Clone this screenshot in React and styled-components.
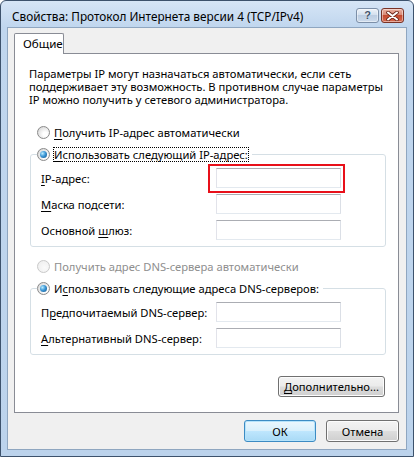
import React from 'react';
import styled, { createGlobalStyle } from 'styled-components';

const GlobalStyle = createGlobalStyle`
  html, body {
    margin: 0;
    padding: 0;
    background: #ffffff;
  }
  body {
    font-family: "Noto Sans", "Open Sans", "Liberation Sans", sans-serif;
    font-size: 11.2px;
    color: #000;
  }
`;

const Window = styled.div`
  width: 414px;
  height: 457px;
  box-sizing: border-box;
  border: 1px solid #3d526c;
  border-radius: 6px 6px 0 0;
  background: linear-gradient(#d6e5f6, #c0d6ee 26px, #bcd3ec);
  display: flex;
  flex-direction: column;
  padding: 0 6px 6px;
  overflow: hidden;
`;

const TitleBar = styled.div`
  height: 26px;
  display: flex;
  align-items: flex-start;
  padding-left: 5px;
  padding-right: 3px;
  flex-shrink: 0;
`;

const TitleText = styled.div`
  flex: 1;
  font-size: 11.8px;
  line-height: 16px;
  margin-top: 7px;
  color: #000;
  white-space: nowrap;
`;

const CaptionButtons = styled.div`
  display: flex;
  gap: 2px;
  margin-top: 7px;
`;

const CaptionButton = styled.div`
  width: 23px;
  height: 15px;
  box-sizing: border-box;
  border-radius: 3px;
  display: flex;
  align-items: center;
  justify-content: center;
  border: 1px solid ${p => (p.$close ? '#7a3326' : '#7c8fa8')};
  background: ${p =>
    p.$close
      ? 'linear-gradient(#eab0a1, #d98a76 45%, #c4492f 50%, #d66a4f)'
      : 'linear-gradient(#eef3f9, #d3dfee 45%, #bccde2 50%, #cddbec)'};
  box-shadow: inset 0 0 0 1px rgba(255, 255, 255, 0.45);
`;

const HelpMark = styled.span`
  font-family: "Liberation Sans", sans-serif;
  font-weight: bold;
  font-size: 11px;
  line-height: 1;
  color: #3f536c;
  text-shadow: 0 0 1px #fff;
`;

const Client = styled.div`
  flex: 1;
  display: flex;
  flex-direction: column;
  background: #f0f0f0;
  border: 1px solid #8fa6c0;
  padding: 5px 7px 7px 6px;
`;

const TabStrip = styled.div`
  display: flex;
  position: relative;
  z-index: 1;
  margin-bottom: -1px;
`;

const Tab = styled.div`
  width: 50px;
  height: 21px;
  box-sizing: border-box;
  border: 1px solid #898c95;
  border-bottom: none;
  background: #ffffff;
  border-radius: 2px 2px 0 0;
  padding-left: 8px;
  line-height: 19px;
  font-size: 11.6px;
`;

const Panel = styled.div`
  flex: 1;
  display: flex;
  flex-direction: column;
  border: 1px solid #898c95;
  background: #ffffff;
  padding: 13px 12px 15px 14px;
`;

const Intro = styled.p`
  margin: 0;
  line-height: 13px;
  white-space: pre;
`;

const RadioRow = styled.label`
  display: flex;
  align-items: center;
  height: 15px;
  gap: 4px;
  white-space: nowrap;
  margin-left: ${p => p.$indent ?? 8}px;
  margin-top: ${p => p.$top || 0}px;
  color: ${p => (p.$disabled ? '#8e8e8e' : '#000')};
`;

const RadioCircle = styled.span`
  width: 13px;
  height: 13px;
  box-sizing: border-box;
  border-radius: 50%;
  flex-shrink: 0;
  display: flex;
  align-items: center;
  justify-content: center;
  border: 1px solid ${p => (p.$disabled ? '#c9c9c9' : '#8a8a8a')};
  background: ${p =>
    p.$disabled
      ? 'radial-gradient(circle at 60% 60%, #fafafa, #ececec)'
      : 'radial-gradient(circle at 65% 65%, #ffffff 20%, #d4d4d4 90%)'};

  &::after {
    content: '';
    display: ${p => (p.$checked ? 'block' : 'none')};
    width: 7px;
    height: 7px;
    border-radius: 50%;
    background: radial-gradient(circle at 35% 35%, #b9ecff 0%, #3d97d6 45%, #0d4f86 100%);
  }
`;

const FocusLabel = styled.span`
  outline: 1px dotted #000;
  outline-offset: 0px;
  line-height: 13px;
`;

const GroupBox = styled.fieldset`
  margin: ${p => p.$top || 0}px 0 0 1px;
  padding: 6px 0 6px 0;
  border: 1px solid #d5dfe5;
  border-radius: 3px;
  display: flex;
  flex-direction: column;
  gap: 6px;
  min-width: 0;
`;

const GroupLegend = styled.legend`
  padding: 0 4px 0 0;
  margin-left: 6px;
`;

const FieldRow = styled.div`
  display: flex;
  align-items: center;
  height: 20px;
  padding-left: 10px;
`;

const FieldLabel = styled.span`
  width: 175px;
  flex-shrink: 0;
  white-space: nowrap;
`;

const FieldWrap = styled.div`
  position: relative;
  display: flex;

  &::after {
    content: '';
    display: ${p => (p.$marked ? 'block' : 'none')};
    position: absolute;
    left: -8px;
    right: -4px;
    top: -4px;
    bottom: -5px;
    border: 2px solid #e8101a;
    pointer-events: none;
  }
`;

const TextBox = styled.input`
  width: 125px;
  height: 20px;
  box-sizing: border-box;
  margin: 0;
  border: 1px solid;
  border-color: #abadb3 #dbdfe6 #e3e9ef #e2e3ea;
  background: #ffffff;
  font: inherit;
  padding: 0 3px;
  outline: none;
`;

const AdvancedRow = styled.div`
  margin-top: auto;
  display: flex;
  justify-content: flex-end;
  margin-right: 1px;
`;

const Button = styled.button`
  box-sizing: border-box;
  width: ${p => p.$w}px;
  height: ${p => p.$h || 22}px;
  margin: 0;
  padding: 0;
  font: inherit;
  color: #000;
  border-radius: 3px;
  border: 1px solid ${p => (p.$default ? '#3c8bc3' : '#707070')};
  background: ${p =>
    p.$default
      ? 'linear-gradient(#ecf7fd, #d9f0fc 48%, #bee6fd 52%, #a9daf6)'
      : 'linear-gradient(#f3f3f3, #ebebeb 48%, #dddddd 52%, #cfcfcf)'};
  box-shadow: inset 0 0 0 1px ${p => (p.$default ? '#b5e3fb' : '#fcfcfc')};
`;

const ButtonRow = styled.div`
  display: flex;
  justify-content: flex-end;
  gap: 10px;
  margin-top: 7px;
`;

const Key = styled.u`
  text-decoration: underline;
  text-underline-offset: 2px;
`;

const CloseGlyph = () => (
  <svg width="13" height="10" viewBox="0 0 13 10">
    <path d="M2 1.5 L11 8.5 M11 1.5 L2 8.5" stroke="#6b2418" strokeWidth="3.6" strokeLinecap="round" />
    <path d="M2 1.5 L11 8.5 M11 1.5 L2 8.5" stroke="#ffffff" strokeWidth="2" strokeLinecap="round" />
  </svg>
);

const Radio = ({ checked, disabled }) => (
  <RadioCircle $checked={checked} $disabled={disabled} />
);

const Field = ({ label, marked }) => (
  <FieldRow>
    <FieldLabel>{label}</FieldLabel>
    <FieldWrap $marked={marked}>
      <TextBox type="text" />
    </FieldWrap>
  </FieldRow>
);

export default function App() {
  return (
    <>
      <GlobalStyle />
      <Window>
        <TitleBar>
          <TitleText>Свойства: Протокол Интернета версии 4 (TCP/IPv4)</TitleText>
          <CaptionButtons>
            <CaptionButton>
              <HelpMark>?</HelpMark>
            </CaptionButton>
            <CaptionButton $close>
              <CloseGlyph />
            </CaptionButton>
          </CaptionButtons>
        </TitleBar>
        <Client>
          <TabStrip>
            <Tab>Общие</Tab>
          </TabStrip>
          <Panel>
            <Intro>
              {'Параметры IP могут назначаться автоматически, если сеть\nподдерживает эту возможность. В противном случае параметры\nIP можно получить у сетевого администратора.'}
            </Intro>

            <RadioRow $top={19}>
              <Radio />
              <span><Key>П</Key>олучить IP-адрес автоматически</span>
            </RadioRow>

            <GroupBox $top={7}>
              <GroupLegend>
                <RadioRow $indent={0}>
                  <Radio checked />
                  <FocusLabel><Key>И</Key>спользовать следующий IP-адрес:</FocusLabel>
                </RadioRow>
              </GroupLegend>
              <Field label={<><Key>I</Key>P-адрес:</>} marked />
              <Field label={<><Key>М</Key>аска подсети:</>} />
              <Field label={<>Основной <Key>ш</Key>люз:</>} />
            </GroupBox>

            <RadioRow $top={12} $disabled>
              <Radio disabled />
              <span>Получить адрес DNS-сервера автоматически</span>
            </RadioRow>

            <GroupBox $top={7}>
              <GroupLegend>
                <RadioRow $indent={0}>
                  <Radio checked />
                  <span>И<Key>с</Key>пользовать следующие адреса DNS-серверов:</span>
                </RadioRow>
              </GroupLegend>
              <Field label={<>П<Key>р</Key>едпочитаемый DNS-сервер:</>} />
              <Field label={<><Key>А</Key>льтернативный DNS-сервер:</>} />
            </GroupBox>

            <AdvancedRow>
              <Button type="button" $w={107} $h={21}><Key>Д</Key>ополнительно...</Button>
            </AdvancedRow>
          </Panel>
          <ButtonRow>
            <Button type="button" $w={72} $default>ОК</Button>
            <Button type="button" $w={73}>Отмена</Button>
          </ButtonRow>
        </Client>
      </Window>
    </>
  );
}
